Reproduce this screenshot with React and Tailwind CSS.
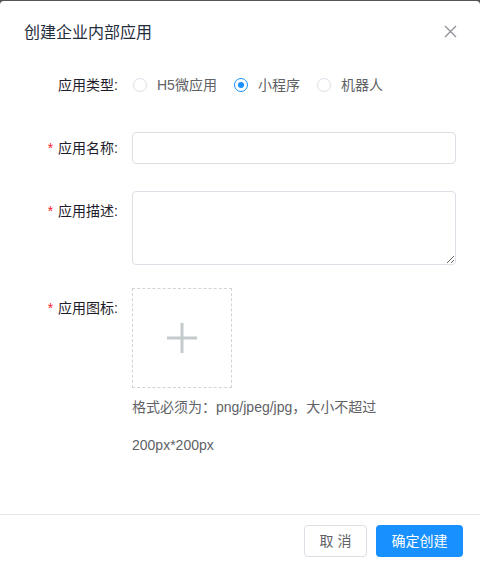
import React, { useState } from 'react';

const font = { fontFamily: '"Liberation Sans", "Noto Sans CJK SC", sans-serif' };

const Radio = ({ checked, label, onClick }) => (
    <label className="flex items-center cursor-pointer mr-[17px]" onClick={onClick}>
        <span
            className={
                checked
                    ? 'w-[14px] h-[14px] rounded-full border border-[#1890ff] flex items-center justify-center'
                    : 'w-[14px] h-[14px] rounded-full border border-[#dcdfe6]'
            }
        >
            {checked && <span className="w-[6px] h-[6px] rounded-full bg-[#1890ff]" />}
        </span>
        <span className="ml-[10px] text-[14px] text-[#606266]">{label}</span>
    </label>
);

const Label = ({ required, children, className = '' }) => (
    <div className={`w-[108px] shrink-0 pr-[14px] text-right text-[14px] text-[#1f1d2b] ${className}`}>
        {required && <span className="text-[#f5222d] mr-[5px]">*</span>}
        {children}
    </div>
);

const App = () => {
    const [type, setType] = useState('mini');

    return (
        <div className="w-[480px] h-[565px] bg-[#555555] pt-px" style={font}>
            <div className="bg-white h-[564px] rounded-t-[4px] flex flex-col">
                {/* header */}
                <div className="flex items-start justify-between pl-6 pr-[22px] pt-[20px]">
                    <div className="text-[16px] leading-6 text-[#1f2d3d]">创建企业内部应用</div>
                    <button className="mt-[2px] w-4 h-4 flex items-center justify-center">
                        <svg width="13" height="13" viewBox="0 0 13 13">
                            <path d="M1 1 L12 12 M12 1 L1 12" stroke="#909399" strokeWidth="1.4" fill="none" />
                        </svg>
                    </button>
                </div>

                {/* body */}
                <div className="flex-1 pl-6 pr-6">
                    <div className="flex items-center h-8 mt-[24px]">
                        <Label>应用类型:</Label>
                        <div className="flex items-center pl-px">
                            <Radio checked={type === 'h5'} label="H5微应用" onClick={() => setType('h5')} />
                            <Radio checked={type === 'mini'} label="小程序" onClick={() => setType('mini')} />
                            <Radio checked={type === 'robot'} label="机器人" onClick={() => setType('robot')} />
                        </div>
                    </div>

                    <div className="flex items-center mt-[31px]">
                        <Label required>应用名称:</Label>
                        <input className="w-[324px] h-8 border border-[#dcdfe6] rounded-[4px] px-3 text-[14px] outline-none" />
                    </div>

                    <div className="flex items-start mt-[27px]">
                        <Label required className="leading-[40px]">应用描述:</Label>
                        <textarea className="w-[324px] h-[74px] border border-[#dcdfe6] rounded-[4px] px-3 py-1 text-[14px] outline-none" />
                    </div>

                    <div className="flex items-start mt-[23px]">
                        <Label required className="leading-[40px]">应用图标:</Label>
                        <div>
                            <div className="w-[100px] h-[100px] border border-dashed border-[#d3d3d3] flex items-center justify-center cursor-pointer">
                                <svg width="30" height="30" viewBox="0 0 30 30">
                                    <path d="M0 15 H30 M15 0 V30" stroke="#c5cacd" strokeWidth="3" fill="none" />
                                </svg>
                            </div>
                            <div className="text-[14px] leading-[38px] text-[#606266]">
                                <div>格式必须为：png/jpeg/jpg，大小不超过</div>
                                <div>200px*200px</div>
                            </div>
                        </div>
                    </div>
                </div>

                {/* footer */}
                <div className="h-[51px] border-t border-[#e8e8e8] flex justify-end items-start pt-[10px] pr-[17px] gap-[9px]">
                    <button className="w-[63px] h-8 border border-[#dcdfe6] rounded-[4px] bg-white text-[14px] text-[#606266]">
                        取 消
                    </button>
                    <button className="w-[87px] h-8 rounded-[4px] bg-[#1890ff] text-[14px] text-white">
                        确定创建
                    </button>
                </div>
            </div>
        </div>
    );
};

export default App;
